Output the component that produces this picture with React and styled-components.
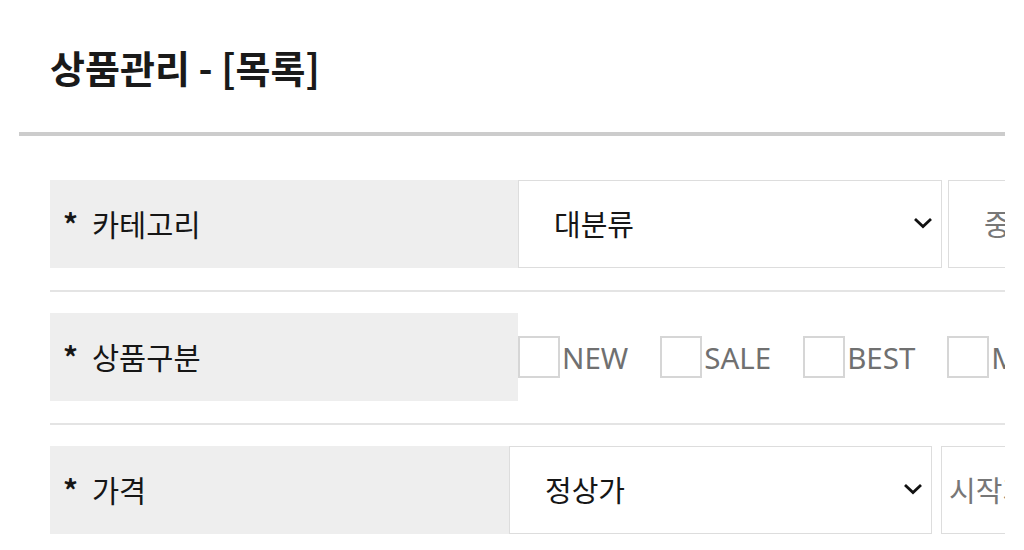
import React from 'react';
import styled, { createGlobalStyle } from 'styled-components';

const GlobalStyle = createGlobalStyle`
	html, body {
		margin: 0;
		padding: 0;
		background: #fff;
	}
	body {
		font-family: 'Noto Sans', 'Noto Sans CJK KR', sans-serif;
		color: #222;
	}
`;

const Chevron = () => (
	<svg width="20" height="13" viewBox="0 0 20 13" fill="none">
		<path d="M2 3L10 10.5L18 3" stroke="#111" strokeWidth="2.8" />
	</svg>
);

const App = () => {
	return (
		<Page>
			<GlobalStyle />
			<TitleBar>
				<h2>상품관리 - [목록]</h2>
			</TitleBar>
			<Form>
				<Row>
					<Label width={468}>
						<span className="star">*</span>카테고리
					</Label>
					<SelectWrap width={424}>
						<select defaultValue="대분류">
							<option>대분류</option>
						</select>
						<i>
							<Chevron />
						</i>
					</SelectWrap>
					<SelectWrap width={424} gap={6} disabled>
						<select defaultValue="중분류" disabled>
							<option>중분류</option>
						</select>
					</SelectWrap>
				</Row>
				<Row>
					<Label width={468}>
						<span className="star">*</span>상품구분
					</Label>
					<CheckGroup>
						{['NEW', 'SALE', 'BEST', 'MD'].map((name) => (
							<CheckItem key={name}>
								<input type="checkbox" />
								<span>{name}</span>
							</CheckItem>
						))}
					</CheckGroup>
				</Row>
				<Row>
					<Label width={459}>
						<span className="star">*</span>가격
					</Label>
					<SelectWrap width={423}>
						<select defaultValue="정상가">
							<option>정상가</option>
						</select>
						<i>
							<Chevron />
						</i>
					</SelectWrap>
					<PriceInput type="text" placeholder="시작가" />
				</Row>
			</Form>
		</Page>
	);
};

export default App;

const Page = styled.div`
	margin-left: 19px;
	width: 986px;
	overflow: hidden;
`;

const TitleBar = styled.div`
	display: flex;
	align-items: center;
	height: 132px;
	padding-left: 31px;
	border-bottom: 4px solid #cccccc;

	h2 {
		margin: 0;
		font-family: 'Noto Sans CJK KR', sans-serif;
		font-size: 38px;
		font-weight: 700;
		color: #1a1a1a;
	}
`;

const Form = styled.div`
	padding: 23px 0 0 31px;
	width: 1400px;
`;

const Row = styled.div`
	display: flex;
	align-items: stretch;
	padding: 21px 0 22px;
	border-bottom: 2px solid #e4e4e4;
`;

const Label = styled.div`
	display: flex;
	align-items: center;
	flex: 0 0 ${({ width }) => width}px;
	height: 88px;
	padding: 0 0 3px 13px;
	box-sizing: border-box;
	background-color: #eeeeee;
	font-family: 'Noto Sans CJK KR', sans-serif;
	font-size: 29.5px;
	color: #161616;

	.star {
		margin-right: 14px;
		font-weight: 700;
	}
`;

const SelectWrap = styled.div`
	position: relative;
	flex: 0 0 ${({ width }) => width}px;
	margin-left: ${({ gap }) => gap || 0}px;
	height: 88px;

	select {
		appearance: none;
		width: 100%;
		height: 100%;
		padding: 0 0 3px 35px;
		border: 1px solid #dddddd;
		background: #fff;
		font-family: 'Noto Sans CJK KR', sans-serif;
		font-size: 29px;
		color: #161616;
		outline: none;
	}

	select:disabled {
		color: #777;
		opacity: 1;
	}

	i {
		position: absolute;
		right: 9px;
		top: 36px;
		display: flex;
	}
`;

const CheckGroup = styled.div`
	display: flex;
	align-items: center;
	gap: 32px;
`;

const CheckItem = styled.label`
	display: flex;
	align-items: center;
	gap: 2px;

	input {
		appearance: none;
		margin: 0;
		width: 42px;
		height: 42px;
		border: 2px solid #d6d6d6;
		background: #fff;
	}

	span {
		font-family: 'Noto Sans', sans-serif;
		font-size: 29.5px;
		color: #707070;
	}
`;

const PriceInput = styled.input`
	flex: 0 0 300px;
	margin-left: 9px;
	height: 88px;
	box-sizing: border-box;
	padding: 0 7px 3px;
	border: 1px solid #dddddd;
	font-family: 'Noto Sans CJK KR', sans-serif;
	font-size: 29px;
	outline: none;

	&::placeholder {
		color: #777;
	}
`;
